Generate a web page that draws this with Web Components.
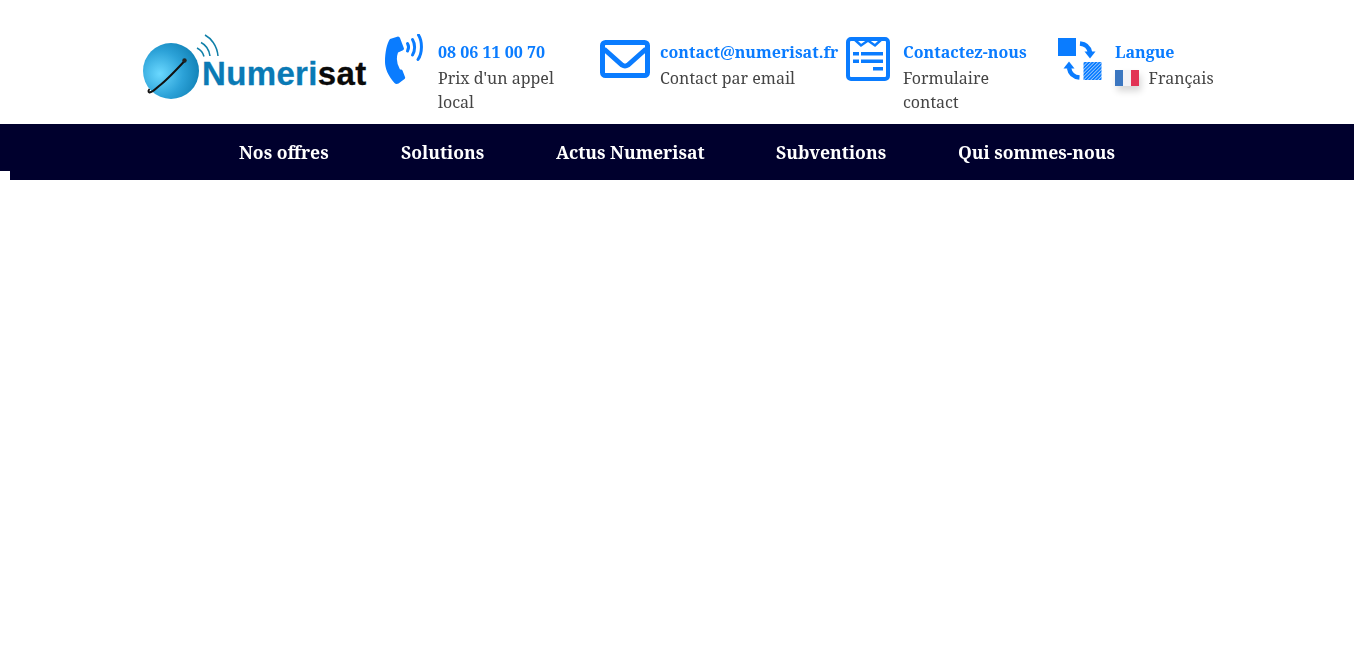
<!DOCTYPE html>
<html lang="fr">
<head>
<meta charset="utf-8">
<title>Numerisat</title>
<style>
  html, body { margin: 0; background: #fff; }
  body { width: 1354px; font-family: "Noto Serif", "DejaVu Serif", serif; }
</style>
</head>
<body>
<site-header>
  <site-logo></site-logo>
  <contact-item title-text="08 06 11 00 70" style="--w:215px;--gap:15px;--icon:38px;--top:0px;--pad:20px" icon="phone">Prix d'un appel local</contact-item>
  <contact-item title-text="contact@numerisat.fr" style="--w:246px;--gap:10px;--icon:50px;--top:6px;--pad:0px" icon="mail">Contact par email</contact-item>
  <contact-item title-text="Contactez-nous" style="--w:212px;--gap:13px;--icon:44px;--top:3px;--pad:20px" icon="form">Formulaire contact</contact-item>
  <contact-item title-text="Langue" style="--w:170px;--gap:13px;--icon:44px;--top:4px;--pad:0px" icon="swap"><lang-flag></lang-flag>Français</contact-item>
</site-header>
<main-nav>
  <a>Nos offres</a>
  <a>Solutions</a>
  <a>Actus Numerisat</a>
  <a>Subventions</a>
  <a>Qui sommes-nous</a>
</main-nav>

<script>
  const ICONS = {
    phone: `<svg width="38" height="50" viewBox="0 0 38 50">
      <path fill="#0a7cff" d="M5 5 13 2.500Q14.500 2.500 15 4L19 14.500Q19 16 17.500 16.500L13 18.500Q10 27 15 35.500L16 35.500Q17 35.500 17.500 36.500L20 43Q20.500 44 19.500 45L13.500 49.500Q11 50.500 9.500 49C3 42 0 34 0 28 0 18 2 9 5 5z"/>
      <g fill="none" stroke="#0a7cff" stroke-width="3" stroke-linecap="round">
        <path d="M22.500 9.500c1.400 2.300 1.400 5 0 7.500"/>
        <path d="M27.500 5.500c2.800 4.500 2.800 11 0 15.500"/>
        <path d="M33.500 1c4 6.500 4 18-.5 24.500"/>
      </g></svg>`,
    mail: `<svg width="50" height="38" viewBox="0 0 50 38">
      <rect x="2.500" y="2.500" width="45" height="33" rx="3" fill="none" stroke="#0a7cff" stroke-width="5"/>
      <path d="M4 9 22 25q3 2 6 0L46 9" fill="none" stroke="#0a7cff" stroke-width="5"/></svg>`,
    form: `<svg width="44" height="44" viewBox="0 0 44 44">
      <rect x="2" y="2" width="40" height="40" rx="3" fill="none" stroke="#0a7cff" stroke-width="4"/>
      <path d="M8 2 15 8.500 22 3.500 29 8.500 36 2" fill="none" stroke="#0a7cff" stroke-width="2.500"/>
      <g fill="#0a7cff">
        <rect x="7" y="15" width="6" height="3.500"/><rect x="15" y="15" width="22" height="3.500"/>
        <rect x="7" y="22.500" width="6" height="3.500"/><rect x="15" y="22.500" width="22" height="3.500"/>
        <rect x="27" y="30" width="10" height="3.500"/>
      </g></svg>`,
    swap: `<svg width="44" height="44" viewBox="0 0 44 44">
      <defs><pattern id="hatch" width="2.500" height="2.500" patternUnits="userSpaceOnUse" patternTransform="rotate(45)">
        <rect width="2.500" height="2.500" fill="#0a7cff"/><rect width="0.700" height="2.500" fill="#bcdcff"/>
      </pattern></defs>
      <rect x="0" y="0" width="18" height="18" fill="#0a7cff"/>
      <rect x="25.500" y="24" width="18" height="18" fill="url(#hatch)"/>
      <path d="M22 5.500c5.500.5 9 3.500 10 9" fill="none" stroke="#0a7cff" stroke-width="4.500"/>
      <path d="M26.500 13.500h11l-5.500 7z" fill="#0a7cff"/>
      <path d="M21.500 39.500c-6-.5-9.500-3.500-10.500-9.500" fill="none" stroke="#0a7cff" stroke-width="4.500"/>
      <path d="M5.500 30.500 11 23.500 16.500 30.500z" fill="#0a7cff"/></svg>`
  };

  class SiteHeader extends HTMLElement {
    constructor() {
      super();
      this.attachShadow({ mode: 'open' });
      this.shadowRoot.innerHTML = `
        <style>
          :host { display: flex; height: 124px; padding-left: 143px; box-sizing: border-box; align-items: flex-start; }
        </style>
        <slot></slot>`;
    }
  }

  class SiteLogo extends HTMLElement {
    constructor() {
      super();
      this.attachShadow({ mode: 'open' });
      this.shadowRoot.innerHTML = `
        <style>
          :host { display: block; position: relative; width: 242px; height: 124px; flex: none; }
          svg { position: absolute; left: 0; top: 34px; }
          span {
            position: absolute; left: 59px; top: 50px;
            font: bold 33px/48px "Liberation Sans", Arial, sans-serif; letter-spacing: .35px;
            color: #0a7ab5; white-space: nowrap; -webkit-text-stroke: .3px currentColor;
          }
          b { color: #0a0a0a; }
        </style>
        <svg width="80" height="66" viewBox="0 0 80 66">
          <defs>
            <radialGradient id="globe" cx=".3" cy=".55" r=".75">
              <stop offset="0" stop-color="#6ad8ff"/>
              <stop offset=".55" stop-color="#2ca2d8"/>
              <stop offset="1" stop-color="#0f7fb4"/>
            </radialGradient>
          </defs>
          <circle cx="28" cy="37" r="28" fill="url(#globe)"/>
          <path d="M42 26.500C34 35 24 46 16 52c-3 2.500-6 6-9.500 6.500-1.500-.5-1.200-2 0-3.500" fill="none" stroke="#111" stroke-width="2"/>
          <circle cx="41.500" cy="26.500" r="2.200" fill="#222"/>
          <g fill="none" stroke="#0f7fa8" stroke-width="1.500">
            <path d="M54 14c3 1.500 6 4.500 7 8.500"/>
            <path d="M58 8.500c4 2 8 6.500 9 13.500"/>
            <path d="M62 1c5.500 3 12 10 13 21"/>
          </g>
        </svg>
        <span>Numeri<b>sat</b></span>`;
    }
  }

  class ContactItem extends HTMLElement {
    constructor() {
      super();
      this.attachShadow({ mode: 'open' });
    }

    connectedCallback() {
      this.shadowRoot.innerHTML = `
        <style>
          :host { display: flex; align-items: flex-start; width: var(--w); gap: var(--gap); padding-top: 34px; box-sizing: border-box; flex: none; }
          .icon { width: var(--icon); flex: none; padding-top: var(--top); }
          svg { display: block; }
          .text { padding-top: 6px; padding-right: var(--pad); min-width: 0; font-size: 16px; line-height: 24px; color: #444; flex: 1; will-change: transform; }
          .title { display: block; font-weight: 700; color: #0a7cff; line-height: 24px; margin-bottom: 2px; white-space: nowrap; }
        </style>
        <div class="icon">${ICONS[this.getAttribute('icon')]}</div>
        <div class="text"><span class="title">${this.getAttribute('title-text')}</span><slot></slot></div>`;
    }
  }

  class LangFlag extends HTMLElement {
    constructor() {
      super();
      this.attachShadow({ mode: 'open' });
      this.shadowRoot.innerHTML = `
        <style>
          :host {
            display: inline-block; width: 24px; height: 16px; margin-right: 9.500px; vertical-align: -2px;
            background: linear-gradient(90deg, #3b76c0 0 8px, #f2f2f6 8px 16px, #e23355 16px);
            box-shadow: 2px 5px 7px rgba(0,0,0,.16);
          }
        </style>`;
    }
  }

  class MainNav extends HTMLElement {
    constructor() {
      super();
      this.attachShadow({ mode: 'open' });
      this.shadowRoot.innerHTML = `
        <style>
          :host { display: flex; align-items: flex-start; width: 1354px; }
          .tab { width: 10px; height: 47px; background: #00002d; flex: none; }
          .bar {
            flex: 1; height: 56px; background: #00002d; display: flex; align-items: center;
            padding-left: 229px; gap: 71.950px; box-sizing: border-box;
          }
          ::slotted(a) { color: #fff; font-weight: 700; font-size: 17.600px; line-height: 24px; white-space: nowrap; will-change: transform; }
        </style>
        <div class="tab"></div>
        <nav class="bar"><slot></slot></nav>`;
    }
  }

  customElements.define('site-header', SiteHeader);
  customElements.define('site-logo', SiteLogo);
  customElements.define('contact-item', ContactItem);
  customElements.define('lang-flag', LangFlag);
  customElements.define('main-nav', MainNav);
</script>
</body>
</html>
